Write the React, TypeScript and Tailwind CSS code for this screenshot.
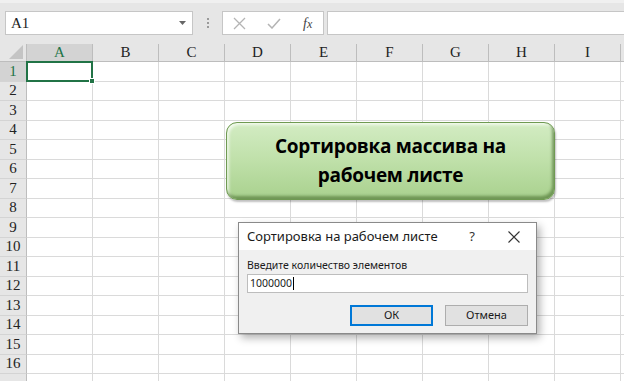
import React from "react";

/* Excel-like sheet with a macro button and an input dialog on top */

const COLS = ["A", "B", "C", "D", "E", "F", "G", "H", "I"];
const ROWS = Array.from({ length: 17 }, (_, i) => i + 1);

const serif = { fontFamily: '"Liberation Serif", "DejaVu Serif", serif' };
const ui = { fontFamily: '"Noto Sans", "Open Sans", sans-serif' };

function Toolbar() {
  return (
    <div className="flex h-[44px] items-start gap-0 border-t-[3px] border-[#f0f0f0] bg-[#e6e6e6] pt-[8px]">
      {/* name box */}
      <div className="ml-[5px] flex h-[24px] w-[188px] items-center justify-between border border-[#c6c6c6] bg-white pl-[5px] pr-[6px]">
        <span className="text-[15px] text-[#222]" style={serif}>
          A1
        </span>
        <svg width="7" height="4" viewBox="0 0 7 4">
          <path d="M0 0h7L3.5 4z" fill="#666" />
        </svg>
      </div>
      {/* grip */}
      <div className="flex h-[24px] w-[29px] flex-col items-center justify-center gap-[2px]">
        <span className="h-[2px] w-[2px] bg-[#9a9a9a]" />
        <span className="h-[2px] w-[2px] bg-[#9a9a9a]" />
        <span className="h-[2px] w-[2px] bg-[#9a9a9a]" />
      </div>
      {/* cancel / enter / fx */}
      <div className="flex h-[24px] w-[102px] items-center border border-[#c6c6c6] bg-white pl-[10px]">
        <svg width="13" height="13" viewBox="0 0 13 13" className="mr-[21px]">
          <path d="M1 1l11 11M12 1L1 12" stroke="#b4b4b4" strokeWidth="1.3" />
        </svg>
        <svg width="14" height="11" viewBox="0 0 14 11" className="mr-[22px]">
          <path d="M1 6l4 4 8-9" stroke="#b4b4b4" strokeWidth="1.5" fill="none" />
        </svg>
        <span className="text-[14px] italic text-[#444]" style={serif}>
          f<span className="text-[12px]">x</span>
        </span>
      </div>
      {/* formula input */}
      <div className="ml-[3px] h-[24px] flex-1 border border-[#c6c6c6] border-r-0 bg-white" />
    </div>
  );
}

function Sheet() {
  return (
    <div className="grid grid-cols-[27px_repeat(9,66px)_1fr] grid-rows-[18px] auto-rows-[19.5px] bg-white" style={serif}>
      {/* corner */}
      <div className="relative border-b border-r border-[#bdbdbd] bg-[#e6e6e6]">
        <svg width="14" height="14" viewBox="0 0 14 14" className="absolute bottom-[2px] right-[3px]">
          <path d="M14 0v14H0z" fill="#c4c4c4" />
        </svg>
      </div>
      {COLS.map((c) => (
        <div
          key={c}
          className={
            c === "A"
              ? "flex items-center justify-center border-b border-r border-[#bdbdbd] bg-[#d3d3d3] text-[15px] leading-none text-[#217346]"
              : "flex items-center justify-center border-b border-r border-[#bdbdbd] bg-[#e6e6e6] text-[15px] leading-none text-[#222]"
          }
        >
          {c}
        </div>
      ))}
      <div className="border-b border-[#bdbdbd] bg-[#e6e6e6]" />

      {ROWS.map((r) => (
        <React.Fragment key={r}>
          <div
            className={
              r === 1
                ? "flex items-center justify-center border-b border-r border-b-[#d4d4d4] border-r-[#bdbdbd] bg-[#d3d3d3] text-[15px] leading-none text-[#217346]"
                : "flex items-center justify-center border-b border-r border-b-[#d4d4d4] border-r-[#bdbdbd] bg-[#e6e6e6] text-[15px] leading-none text-[#222]"
            }
          >
            {r < 17 ? r : ""}
          </div>
          {COLS.map((c) =>
            r === 1 && c === "A" ? (
              <div key={c} className="relative -ml-px -mt-px border-2 border-[#217346]">
                <span className="absolute -bottom-[4px] -right-[4px] h-[6px] w-[6px] border border-white bg-[#217346]" />
              </div>
            ) : (
              <div key={c} className="border-b border-r border-[#dadada]" />
            )
          )}
          <div className="border-b border-[#dadada]" />
        </React.Fragment>
      ))}
    </div>
  );
}

function MacroButton() {
  return (
    <div
      className="absolute left-[226px] top-[122px] flex h-[78px] w-[329px] items-center justify-center rounded-[11px] border border-[#6f9a52] bg-gradient-to-b from-[#d3ecc3] via-[#bfe0a9] to-[#a9d18e] text-center shadow-[inset_-2px_-3px_3px_rgba(70,110,45,0.6),inset_2px_2px_3px_rgba(255,255,255,0.7),1px_2px_2px_rgba(0,0,0,0.25)]"
      style={{ fontFamily: '"Open Sans", "Noto Sans", sans-serif' }}
    >
      <span className="text-[19px] font-bold leading-[29px] tracking-[-0.3px] text-black">
        Сортировка массива на
        <br />
        рабочем листе
      </span>
    </div>
  );
}

function Dialog() {
  return (
    <div
      className="absolute left-[238px] top-[222px] w-[299px] border border-[#8a8a8a] bg-[#f0f0f0] shadow-[3px_4px_8px_rgba(0,0,0,0.3)]"
      style={ui}
    >
      <div className="flex h-[27px] items-center bg-white pl-[8px] pr-[16px]">
        <span className="flex-1 text-[13px] text-[#1a1a1a]">Сортировка на рабочем листе</span>
        <span className="mr-[33px] text-[13px] text-[#333]">?</span>
        <svg width="12" height="12" viewBox="0 0 12 12">
          <path d="M0.5 0.5l11 11M11.5 0.5l-11 11" stroke="#333" strokeWidth="1.1" />
        </svg>
      </div>
      <div className="flex flex-col px-[8px] pb-[7px] pt-[8px]">
        <span className="text-[10.5px] leading-[14px] text-[#1a1a1a]">Введите количество элементов</span>
        <div className="mt-[2px] flex h-[19px] items-center border border-[#bdbdbd] bg-white pl-[2px] text-[10.5px] text-[#1a1a1a]">
          1000000
          <span className="ml-px h-[13px] w-px bg-black" />
        </div>
        <div className="mt-[12px] flex justify-end gap-[12px]">
          <button className="h-[21px] w-[83px] border border-[#0078d7] bg-[#e1e1e1] text-[11px] text-[#1a1a1a] outline outline-1 -outline-offset-2 outline-[#0078d7]">
            ОК
          </button>
          <button className="h-[21px] w-[83px] border border-[#adadad] bg-[#e1e1e1] text-[11px] text-[#1a1a1a]">
            Отмена
          </button>
        </div>
      </div>
    </div>
  );
}

export default function App() {
  return (
    <div className="relative h-[381px] w-[624px] overflow-hidden bg-white">
      <Toolbar />
      <Sheet />
      <MacroButton />
      <Dialog />
    </div>
  );
}
